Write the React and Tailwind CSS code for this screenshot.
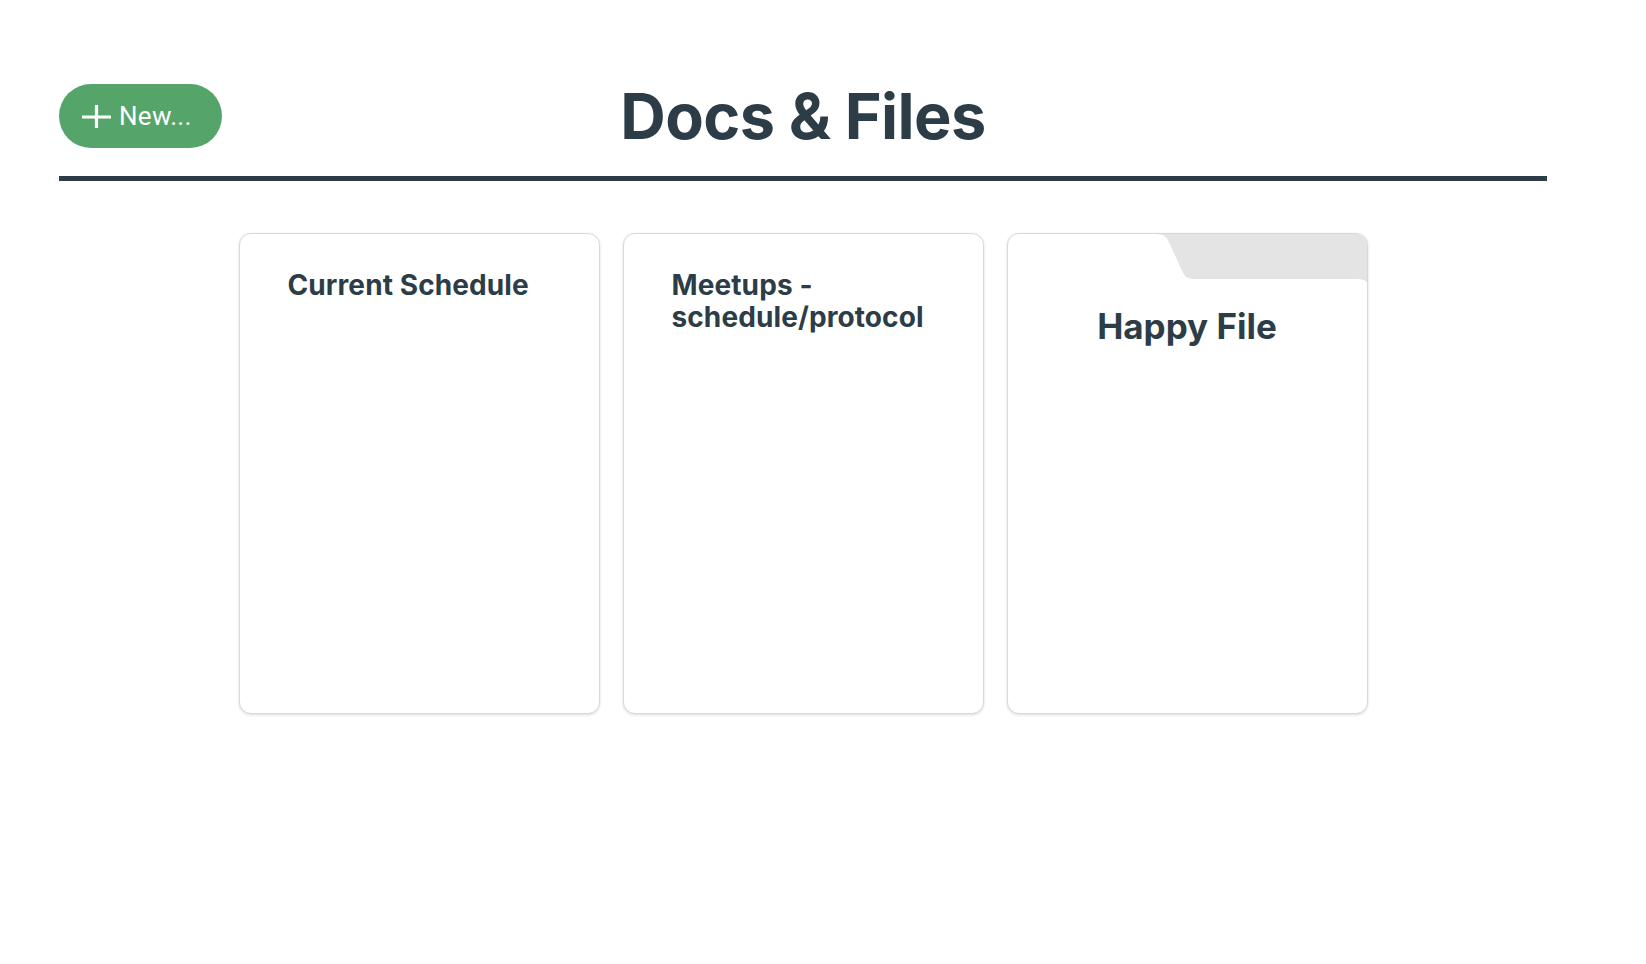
import React from 'react';

const docs = [
  { id: 1, title: 'Current Schedule', kind: 'doc' },
  { id: 2, title: 'Meetups - schedule/protocol', kind: 'doc' },
  { id: 3, title: 'Happy File', kind: 'file' },
];

// --- Main Component ---
const App = () => {
  return (
    <div className="min-h-screen bg-white" style={{ fontFamily: 'Inter, "Liberation Sans", sans-serif' }}>
      <div className="ml-[59px] w-[1488px] pt-[84px]">
        {/* Header */}
        <div className="grid grid-cols-[1fr_auto_1fr] items-center h-16">
          <div>
            <button className="flex items-center gap-[8px] h-16 w-[163px] rounded-full bg-[#55a46a] pl-[23px] text-white text-[26px] tracking-[0.3px] font-[Roboto,sans-serif]">
              <svg width="29" height="23" viewBox="0 0 29 23" className="shrink-0">
                <path d="M0 12 H29 M14.5 0 V23" stroke="white" strokeWidth="3.2" fill="none" />
              </svg>
              <span>New...</span>
            </button>
          </div>
          <h1 className="text-[63px] font-bold leading-none tracking-[-0.6px] text-[#2c3d47]">Docs &amp; Files</h1>
          <div />
        </div>

        <div className="mt-7 h-[5px] bg-[#2c3d47]" />

        {/* Cards */}
        <div className="mt-[52px] flex justify-center gap-[23px]">
          {docs.map((doc) => (
            <DocCard key={doc.id} doc={doc} />
          ))}
        </div>
      </div>
    </div>
  );
};

// --- Card Sub-component ---
function DocCard({ doc }) {
  if (doc.kind === 'file') {
    return (
      <div className="relative w-[361px] h-[481px] rounded-[12px] border border-[#d9d9d9] bg-white shadow-[0_1px_3px_rgba(0,0,0,0.14)] overflow-hidden">
        <svg className="absolute top-0 left-0" width="361" height="60" viewBox="0 0 361 60">
          <path d="M148 0 Q157 0 160 6 L175 39 Q178 45 186 45 L350 45 Q361 45 361 56 L361 0 Z" fill="#e4e4e4" />
        </svg>
        <h2 className="relative pt-[71px] text-center text-[35px] font-bold leading-tight text-[#2c3d47]">
          {doc.title}
        </h2>
      </div>
    );
  }

  return (
    <div className="w-[361px] h-[481px] rounded-[12px] border border-[#d9d9d9] bg-white shadow-[0_1px_3px_rgba(0,0,0,0.14)] pt-[36px] px-[48px]">
      <h2 className="text-[28px] font-bold leading-[31.5px] tracking-[0.1px] text-[#2c3d47]">{doc.title}</h2>
    </div>
  );
}

export default App;
